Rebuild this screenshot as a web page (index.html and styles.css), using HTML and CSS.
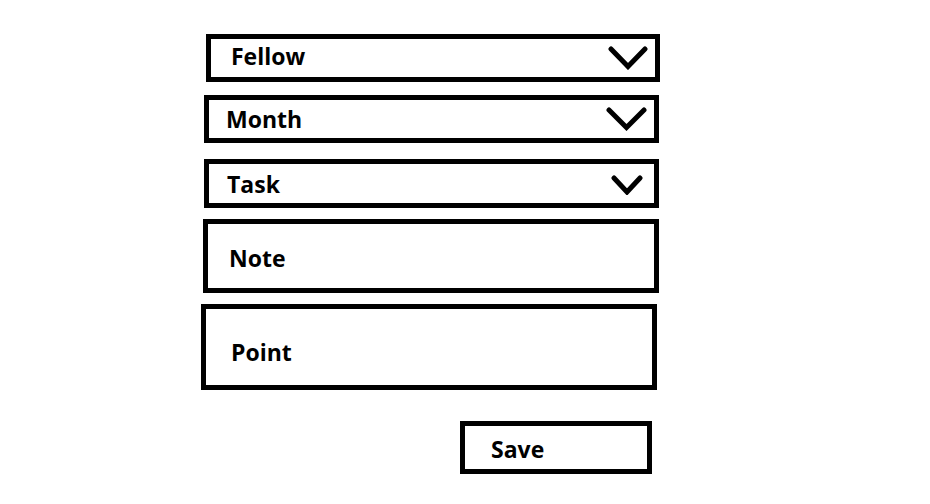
FILE: index.html
```html
<!DOCTYPE html>
<html lang="en">
<head>
    <meta charset="utf-8" />
    <meta name="viewport" content="width=device-width, initial-scale=1.0" />
    <title>Fellow task form</title>
    <link rel="stylesheet" href="styles.css">
</head>
<body>
    <form class="form">
        <div class="field select fellow">
            <span class="label">Fellow</span>
            <svg class="chevron" width="40" height="24" viewBox="0 0 40 24"><polyline points="3,3 20,20.5 37,3" /></svg>
        </div>
        <div class="field select month">
            <span class="label">Month</span>
            <svg class="chevron" width="41" height="24" viewBox="0 0 41 24"><polyline points="3,3 20.5,20.5 38,3" /></svg>
        </div>
        <div class="field select task">
            <span class="label">Task</span>
            <svg class="chevron small" width="32" height="20" viewBox="0 0 32 20"><polyline points="3,3 16,17 29,3" /></svg>
        </div>
        <div class="field note">
            <span class="label">Note</span>
        </div>
        <div class="field point">
            <span class="label">Point</span>
        </div>
        <div class="actions">
            <button type="button" class="save">Save</button>
        </div>
    </form>
</body>
</html>
```

FILE: styles.css
```css
body {
    margin: 0;
    background-color: #fff;
    font-family: "Open Sans", "Liberation Sans", sans-serif;
    color: #000;
}
.form {
    display: flex;
    flex-direction: column;
    align-items: flex-start;
    padding: 34px 0 0 201px;
}
.field {
    display: flex;
    align-items: center;
    justify-content: space-between;
    box-sizing: border-box;
    border: 5px solid #000;
    background-color: #fff;
}
.label {
    font-size: 23px;
    font-weight: 700;
    line-height: 1;
}
.chevron polyline {
    fill: none;
    stroke: #000;
    stroke-width: 5;
    stroke-linecap: round;
    stroke-linejoin: miter;
}
.fellow {
    width: 454px;
    height: 48px;
    margin-left: 5px;
    padding: 0 7px 3px 20px;
}
.fellow .chevron {
    margin-top: 3px;
}
.month {
    width: 455px;
    height: 48px;
    margin: 13px 0 0 3px;
    padding: 0 7px 0 17px;
}
.task {
    width: 455px;
    height: 49px;
    margin: 16px 0 0 3px;
    padding: 2px 11px 0 18px;
}
.note {
    width: 456px;
    height: 74px;
    margin: 11px 0 0 2px;
    padding: 5px 0 0 21px;
}
.point {
    width: 456px;
    height: 86px;
    margin-top: 11px;
    padding: 10px 0 0 25px;
}
.actions {
    margin: 31px 0 0 259px;
}
.save {
    box-sizing: border-box;
    width: 192px;
    height: 53px;
    padding: 3px 0 0 26px;
    border: 5px solid #000;
    background-color: #fff;
    font-family: inherit;
    font-size: 23px;
    font-weight: 700;
    text-align: left;
    color: #000;
}
```
